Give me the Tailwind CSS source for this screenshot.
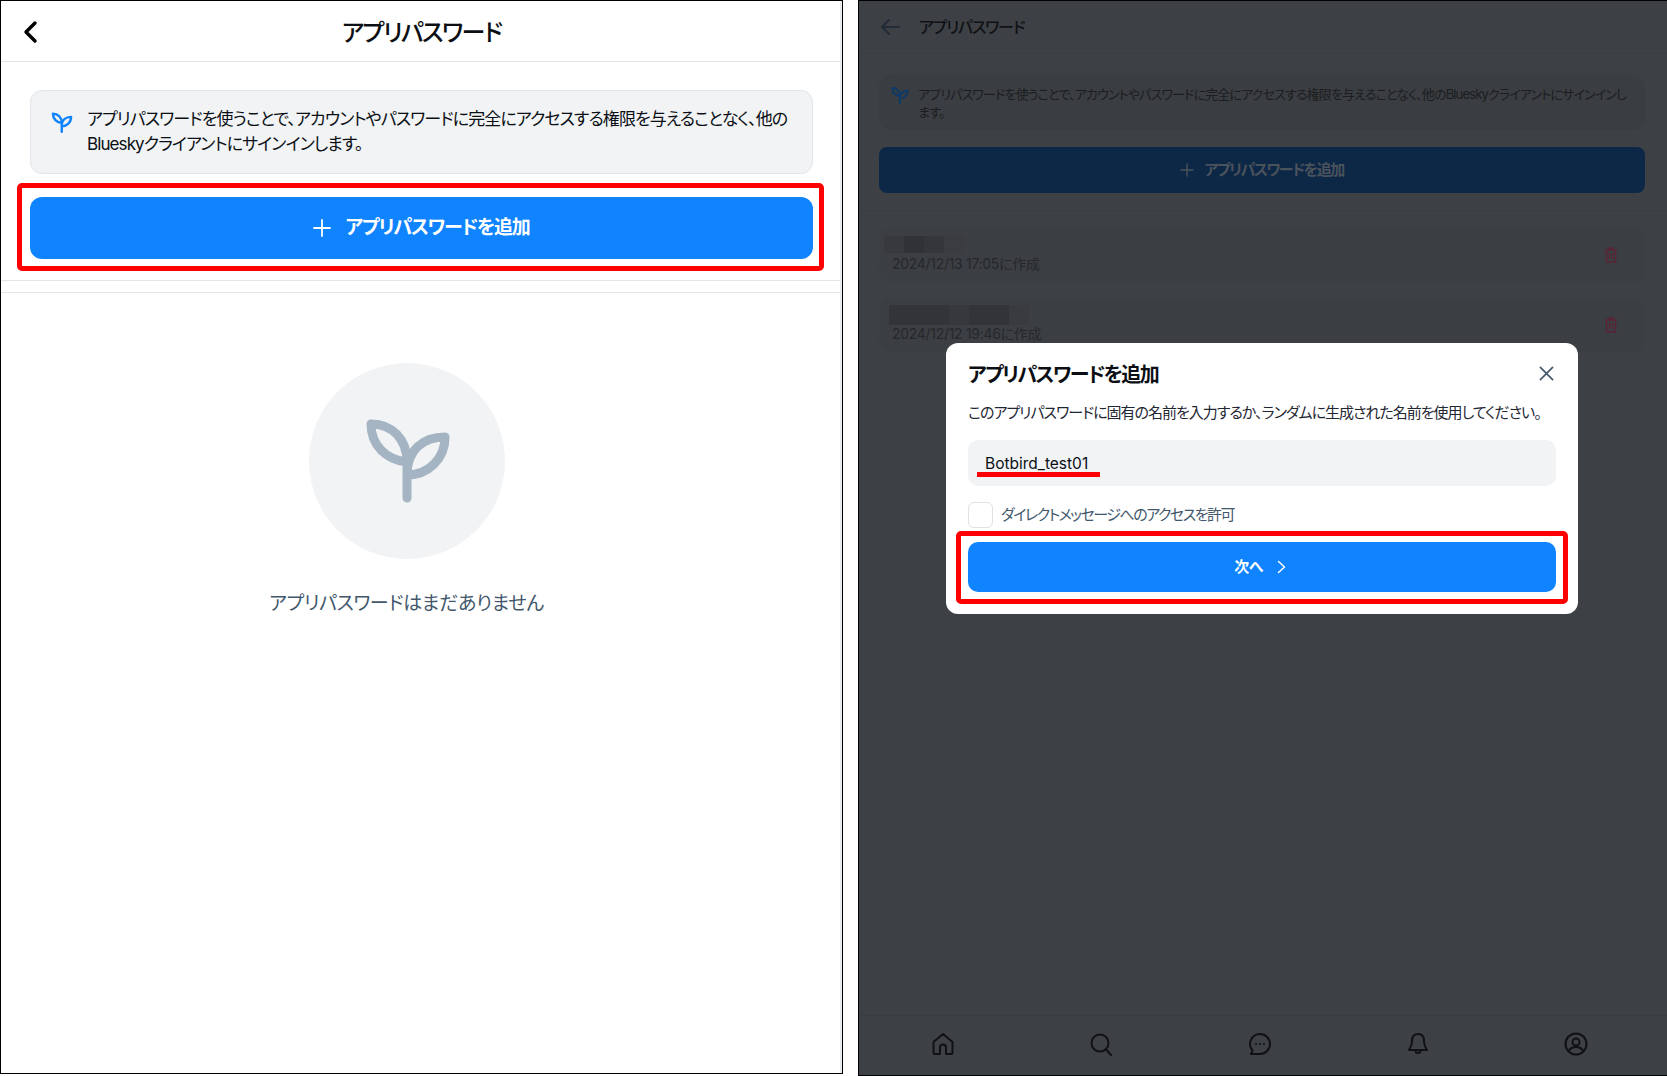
<!DOCTYPE html>
<html lang="ja">
<head>
<meta charset="UTF-8">
<title>アプリパスワード</title>
<script src="https://cdn.jsdelivr.net/npm/@tailwindcss/browser@4"></script>
</head>
<body class="bg-white font-['Inter','Noto_Sans_CJK_JP',sans-serif] [font-feature-settings:'palt'] antialiased overflow-hidden">
<div class="flex h-[1076px] w-[1667px] items-start">

  <!-- Left: empty state -->
  <section class="relative flex h-[1074px] w-[843px] shrink-0 flex-col border border-black bg-white">
    <header class="relative flex h-[61px] shrink-0 items-center justify-center border-b border-[#e2e6ea] pt-[3px]">
      <svg class="absolute left-[20px] top-[18px] h-[26px] w-[20px] text-black" viewBox="0 0 20 26" fill="none" stroke="currentColor" stroke-width="3.400" stroke-linecap="round" stroke-linejoin="round"><path d="M14 4 5 13l9 9"/></svg>
      <h1 class="text-[24px] font-medium leading-none tracking-[-1.600px] text-[#0b0f14]">アプリパスワード</h1>
    </header>
    <div class="px-[29px] pt-[28px]">
      <div class="flex h-[84px] gap-[14px] rounded-[12px] border border-[#e2e6ea] bg-[#f1f3f5] pl-[20px] pr-[10px] pt-[16px]">
        <svg class="mt-[5px] h-[21px] w-[22px] shrink-0 text-[#1083fe]" viewBox="-2 -2 88 86" fill="none" stroke="currentColor" stroke-width="10" stroke-linecap="round" stroke-linejoin="round"><path d="M41 79V43C41 20 26 5 5 5 5 26 20 41 41 43M41 56C62 56 79 40 79 18 58 18 41 30 41 56"/></svg>
        <p class="whitespace-nowrap text-[17px] leading-[25px] tracking-[-0.9px] text-[#0b0f14]">アプリパスワードを使うことで、アカウントやパスワードに完全にアクセスする権限を与えることなく、他の<br>Blueskyクライアントにサインインします。</p>
      </div>
      <button class="mt-[23px] flex h-[62px] w-full items-center justify-center gap-[14px] rounded-[12px] bg-[#1083fe] text-[19px] font-semibold tracking-[-1.200px] text-white">
        <svg class="h-[18px] w-[18px]" viewBox="0 0 18 18" fill="none" stroke="currentColor" stroke-width="1.800" stroke-linecap="round"><path d="M9 1v16M1 9h16"/></svg>
        <span>アプリパスワードを追加</span>
      </button>
    </div>
    <div class="mt-[21px] h-[13px] shrink-0 border-y border-[#e2e6ea]"></div>
    <div class="mr-[30px] flex flex-col items-center pt-[70px]">
      <div class="flex h-[196px] w-[196px] items-center justify-center rounded-full bg-[#f1f3f5]">
        <svg class="ml-[2px] h-[84px] w-[86px] text-[#a5b4c2]" viewBox="0 0 84 84" fill="none" stroke="currentColor" stroke-width="9" stroke-linecap="round" stroke-linejoin="round"><path d="M41 79V43C41 20 26 5 5 5 5 26 20 41 41 43M41 56C62 56 79 40 79 18 58 18 41 30 41 56"/></svg>
      </div>
      <p class="mt-[31px] text-[19px] leading-[28px] tracking-[-0.3px] text-[#42576c]">アプリパスワードはまだありません</p>
    </div>
    <div class="absolute bottom-0 right-0 top-0 w-[2px] bg-[#e8ebee]"></div>
    <!-- annotation -->
    <div class="absolute left-[16px] top-[182px] h-[88px] w-[807px] rounded-[5px] border-[5px] border-[#ff0000]"></div>
  </section>

  <!-- Right: dialog over dimmed list -->
  <section class="relative ml-[15px] flex h-[1076px] min-w-0 flex-1 flex-col border-y border-l border-black bg-[#3d4045]">
    <header class="flex h-[53px] shrink-0 items-center gap-[19px] border-b border-[#393c41] pl-[21px]">
      <svg class="h-[18px] w-[20px] text-[#202b37]" viewBox="0 0 20 18" fill="none" stroke="currentColor" stroke-width="1.800" stroke-linecap="round" stroke-linejoin="round"><path d="M19 9H2M9 2 2 9l7 7"/></svg>
      <h2 class="text-[16px] font-medium leading-none tracking-[-1.200px] text-[#0f1114]">アプリパスワード</h2>
    </header>
    <div class="pl-[20px] pr-[22px] pt-[21px]">
      <div class="flex h-[55px] gap-[9px] rounded-[12px] bg-[#3a3d41] pl-[12px] pr-[6px] pt-[10px]">
        <svg class="mt-[1px] h-[19px] w-[18px] shrink-0 text-[#0e3a68]" viewBox="-2 -2 88 86" fill="none" stroke="currentColor" stroke-width="10" stroke-linecap="round" stroke-linejoin="round"><path d="M41 79V43C41 20 26 5 5 5 5 26 20 41 41 43M41 56C62 56 79 40 79 18 58 18 41 30 41 56"/></svg>
        <p class="whitespace-nowrap text-[13px] leading-[18px] tracking-[-0.85px] text-[#1b1d20]">アプリパスワードを使うことで、アカウントやパスワードに完全にアクセスする権限を与えることなく、他のBlueskyクライアントにサインインし<br>ます。</p>
      </div>
      <div class="mt-[17px] flex h-[46px] items-center justify-center gap-[10px] rounded-[8px] bg-[#0d2847] text-[15px] font-semibold tracking-[-1.500px] text-[#4a525c]">
        <svg class="h-[14px] w-[14px]" viewBox="0 0 14 14" fill="none" stroke="currentColor" stroke-width="1.400" stroke-linecap="round"><path d="M7 1v12M1 7h12"/></svg>
        <span>アプリパスワードを追加</span>
      </div>
    </div>
    <div class="mt-[17px] border-t border-[#393c41]"></div>
    <ul class="flex flex-col gap-[16px] pl-[20px] pr-[22px] pt-[17px]">
      <li class="flex h-[54px] items-center justify-between rounded-[12px] bg-[#3b3e43] pl-[5px] pr-[27px]">
        <div class="-mt-[1px]">
          <div class="flex h-[17px] w-[80px]">
            <div class="w-[20px] bg-[#37393e]"></div><div class="w-[20px] bg-[#303236]"></div><div class="w-[20px] bg-[#34363a]"></div><div class="w-[20px] bg-[#3a3c41]"></div>
          </div>
          <p class="mt-[2px] pl-[8px] text-[14px] leading-[18px] tracking-[-0.3px] text-[#26282c]">2024/12/13 17:05に作成</p>
        </div>
        <svg class="h-[16px] w-[14px] text-[#5c2336]" viewBox="0 0 14 16" fill="none" stroke="currentColor" stroke-width="1.400" stroke-linejoin="round"><path d="M1 3h12M5 3V1h4v2M2.500 3v12h9V3M5.500 6v6M8.500 6v6"/></svg>
      </li>
      <li class="flex h-[54px] items-center justify-between rounded-[12px] bg-[#3b3e43] pl-[10px] pr-[27px]">
        <div class="-mt-[3px]">
          <div class="flex h-[20px] w-[140px]">
            <div class="w-[60px] bg-[#323438]"></div><div class="w-[20px] bg-[#36383c]"></div><div class="w-[40px] bg-[#323438]"></div><div class="w-[20px] bg-[#393b40]"></div>
          </div>
          <p class="pl-[3px] text-[14px] leading-[18px] tracking-[-0.3px] text-[#26282c]">2024/12/12 19:46に作成</p>
        </div>
        <svg class="h-[16px] w-[14px] text-[#5c2336]" viewBox="0 0 14 16" fill="none" stroke="currentColor" stroke-width="1.400" stroke-linejoin="round"><path d="M1 3h12M5 3V1h4v2M2.500 3v12h9V3M5.500 6v6M8.500 6v6"/></svg>
      </li>
    </ul>
    <nav class="mt-auto flex h-[60px] shrink-0 items-start justify-between border-t border-[#393c41] pl-[72px] pr-[79px] pt-[16px] text-[#0f1114]">
      <svg class="h-[24px] w-[24px]" viewBox="0 0 24 24" fill="none" stroke="currentColor" stroke-width="2" stroke-linejoin="round"><path d="M12 2 2.500 10v11a1 1 0 0 0 1 1H9v-6.500a3 3 0 0 1 6 0V22h5.500a1 1 0 0 0 1-1V10z"/></svg>
      <svg class="h-[24px] w-[24px]" viewBox="0 0 24 24" fill="none" stroke="currentColor" stroke-width="2" stroke-linecap="round"><circle cx="11" cy="11" r="8.500"/><path d="m17.500 18 4.500 5"/></svg>
      <svg class="h-[24px] w-[24px]" viewBox="0 0 24 24" fill="none" stroke="currentColor" stroke-width="2" stroke-linejoin="round"><path d="M12 2a10 10 0 0 1 0 20H3l1.500-3.500A10 10 0 0 1 12 2z"/><circle cx="8" cy="12" r="1" fill="currentColor" stroke="none"/><circle cx="12" cy="12" r="1" fill="currentColor" stroke="none"/><circle cx="16" cy="12" r="1" fill="currentColor" stroke="none"/></svg>
      <svg class="h-[24px] w-[24px]" viewBox="0 0 24 24" fill="none" stroke="currentColor" stroke-width="2" stroke-linejoin="round"><path d="M12 2c-4 0-6 3-6 7 0 5-2 7-3 9h18c-1-2-3-4-3-9 0-4-2-7-6-7zM9.500 18.500a2.500 2.500 0 0 0 5 0"/></svg>
      <svg class="h-[24px] w-[24px]" viewBox="0 0 24 24" fill="none" stroke="currentColor" stroke-width="2"><circle cx="12" cy="12" r="10.500"/><circle cx="12" cy="10" r="3.500"/><path d="M4.500 19c2-3 4.500-4 7.500-4s5.500 1 7.500 4"/></svg>
    </nav>

    <!-- Dialog -->
    <div class="absolute left-[87px] top-[342px] h-[271px] w-[632px] rounded-[12px] bg-white px-[22px] pt-[19px]">
      <div class="flex h-[26px] items-center justify-between">
        <h3 class="text-[20px] font-semibold leading-none tracking-[-1.600px] text-[#0b0f14]">アプリパスワードを追加</h3>
        <svg class="-mt-[3px] mr-[2px] h-[15px] w-[15px] text-[#42576c]" viewBox="0 0 16 16" fill="none" stroke="currentColor" stroke-width="1.800" stroke-linecap="round"><path d="M1.500 1.500l13 13M14.500 1.500l-13 13"/></svg>
      </div>
      <p class="mt-[14px] whitespace-nowrap text-[15px] leading-[22px] tracking-[-1px] text-[#1f2733]">このアプリパスワードに固有の名前を入力するか、ランダムに生成された名前を使用してください。</p>
      <div class="relative mt-[16px] flex h-[46px] items-center rounded-[10px] bg-[#f1f3f5] pl-[17px] pt-[1px] text-[15.500px] text-[#0b0f14]">
        Botbird_test01
        <div class="absolute left-[9px] top-[32px] h-[5px] w-[123px] bg-[#ff0000]"></div>
      </div>
      <label class="mt-[16px] flex items-center gap-[8px]">
        <span class="h-[26px] w-[25px] rounded-[6px] border border-[#dde2e7] bg-white"></span>
        <span class="text-[15px] tracking-[-1.500px] text-[#42576c]">ダイレクトメッセージへのアクセスを許可</span>
      </label>
      <button class="mt-[14px] flex h-[50px] w-full items-center justify-center gap-[14px] rounded-[10px] bg-[#1083fe] pr-[4px] text-[15px] font-semibold tracking-[-0.5px] text-white">
        <span>次へ</span>
        <svg class="h-[14px] w-[9px]" viewBox="0 0 9 14" fill="none" stroke="currentColor" stroke-width="1.500" stroke-linecap="round" stroke-linejoin="round"><path d="M1.500 1.500 7.500 7l-6 5.500"/></svg>
      </button>
      <!-- annotation -->
      <div class="absolute left-[10px] top-[188px] h-[73px] w-[612px] rounded-[5px] border-[5px] border-[#ff0000]"></div>
    </div>
  </section>
</div>
</body>
</html>
